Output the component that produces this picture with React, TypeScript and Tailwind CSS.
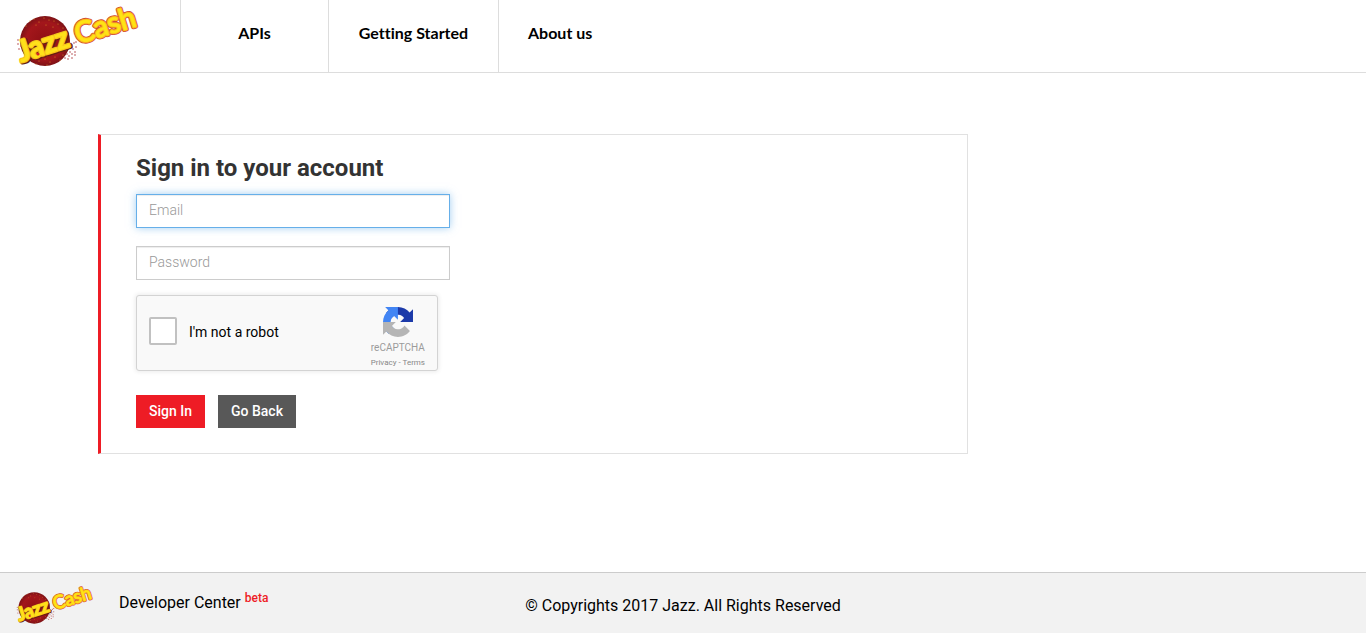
import React, { useId } from "react";

const DOTS: [number, number][] = [
  [30, 21], [34, 19], [39, 22], [44, 18], [49, 20], [54, 21], [58, 24], [26, 26], [36, 25], [46, 25], [53, 27], [63, 28],
  [27, 62], [33, 58], [39, 61], [45, 59], [50, 62], [55, 57], [60, 60], [36, 64], [47, 65], [63, 55], [52, 54], [42, 56],
];

const HALO: [number, number][] = [
  [18, 40], [21, 42], [18, 44], [21, 46], [19, 49], [66, 50], [69, 48], [72, 45], [74, 43], [67, 54], [70, 52], [73, 49],
  [76, 47], [65, 58], [69, 56], [72, 54], [75, 52], [76, 42], [68, 59], [75, 55], [72, 58],
];

function JazzCashLogo({ className }: { className: string }) {
  const id = useId();
  return (
    <svg viewBox="16 0 124 68" className={className} role="img" aria-label="JazzCash">
      <defs>
        <radialGradient id={id}>
          <stop offset="0" stopColor="#8e1014" />
          <stop offset="0.75" stopColor="#a3161b" />
          <stop offset="1" stopColor="#7d1216" />
        </radialGradient>
      </defs>
      <circle cx="45" cy="41" r="25" fill={`url(#${id})`} />
      {DOTS.map(([x, y]) => (
        <circle key={`${x}-${y}`} cx={x} cy={y} r="0.6" fill="#d98324" />
      ))}
      {HALO.map(([x, y]) => (
        <circle key={`${x}-${y}`} cx={x} cy={y} r="0.8" fill="#b5484c" />
      ))}
      <g
        fontFamily="Lato, sans-serif"
        fontWeight="400"
        strokeLinejoin="round"
        strokeLinecap="round"
      >
        <g transform="translate(21 62) rotate(-18)" fontSize="29">
          <text fill="#5f2410" stroke="#5f2410" strokeWidth="4" x="1" y="1" aria-hidden="true">Jazz</text>
          <text fill="#ffd91c" stroke="#f8c41c" strokeWidth="3.4">Jazz</text>
          <text fill="#ffe11a" stroke="#ffe11a" strokeWidth="1" aria-hidden="true">Jazz</text>
        </g>
        <g transform="translate(78 44) rotate(-17)" fontSize="29">
          <text fill="#cf4a35" stroke="#cf4a35" strokeWidth="4.4" aria-hidden="true">Cash</text>
          <text fill="#fbb51c" stroke="#fbb51c" strokeWidth="2.8">Cash</text>
          <text fill="#ffe414" stroke="#ffe414" strokeWidth="0.6" aria-hidden="true">Cash</text>
        </g>
      </g>
      <circle cx="38" cy="54" r="1.6" fill="#d3232a" />
    </svg>
  );
}

function RecaptchaLogo() {
  return (
    <svg viewBox="0 0 64 64" className="size-[30px]" aria-hidden="true">
      <path
        fill="#1c3aa9"
        d="M64 31.955l-.033-1.37V4.687l-7.16 7.16C50.948 4.674 42.033.093 32.05.093c-10.4 0-19.622 4.96-25.458 12.64l11.736 11.86a15.55 15.55 0 0 1 4.754-5.334c2.05-1.6 4.952-2.906 8.968-2.906.485 0 .86.057 1.135.163 4.976.393 9.288 3.14 11.828 7.124l-8.307 8.307L64 31.953"
      />
      <path
        fill="#4285f4"
        d="M31.862.094l-1.37.033H4.594l7.16 7.16C4.58 13.147 0 22.06 0 32.046c0 10.4 4.96 19.622 12.64 25.458L24.5 45.768a15.55 15.55 0 0 1-5.334-4.754c-1.6-2.05-2.906-4.952-2.906-8.968 0-.485.057-.86.163-1.135.393-4.976 3.14-9.288 7.124-11.828l8.307 8.307L31.86.095"
      />
      <path
        fill="#b5b5b5"
        d="M.001 32.045l.033 1.37v25.898l7.16-7.16c5.86 7.173 14.774 11.754 24.76 11.754 10.4 0 19.622-4.96 25.458-12.64l-11.736-11.86a15.55 15.55 0 0 1-4.754 5.334c-2.05 1.6-4.952 2.906-8.968 2.906-.485 0-.86-.057-1.135-.163-4.976-.393-9.288-3.14-11.828-7.124l8.307-8.307c-10.522.04-22.4.066-27.295-.005"
      />
    </svg>
  );
}

const fieldClass =
  "block h-[34px] w-full border bg-white px-3 pb-0.5 text-sm font-light text-[#555555] outline-none placeholder:text-[#999999]";

export default function App() {
  return (
    <div className="flex min-h-screen flex-col bg-white font-['Roboto',sans-serif] text-black">
      <header className="flex h-[73px] border-b border-[#dddddd]">
        <a href="#home" className="w-[181px] shrink-0 border-r border-[#dddddd] pl-4">
          <JazzCashLogo className="h-17 w-[124px] overflow-visible" />
        </a>
        <nav className="flex font-['Lato',sans-serif] text-base leading-5 font-bold [font-variant-ligatures:none]">
          <a href="#apis" className="w-37 border-r border-[#dddddd] pt-[23px] text-center">APIs</a>
          <a href="#start" className="w-[170px] border-r border-[#dddddd] pt-[23px] text-center">Getting Started</a>
          <a href="#about" className="px-[29px] pt-[23px]">About us</a>
        </nav>
      </header>

      <main className="grow px-[98px] pt-[61px] pb-12">
        <form
          className="max-w-[870px] border border-l-3 border-[#e1e1e1] border-l-[#ee1c25] pt-5 pr-6 pb-[25px] pl-[35px]"
          onSubmit={(e) => e.preventDefault()}
        >
          <h1 className="text-2xl leading-[26px] font-bold text-[#333333]">Sign in to your account</h1>
          <div className="mt-[13px] flex max-w-[314px] flex-col gap-[18px]">
            <input
              type="email"
              aria-label="Email"
              placeholder="Email"
              className={`${fieldClass} border-[#66afe9] shadow-[inset_0_1px_1px_rgba(0,0,0,0.075),0_0_8px_rgba(102,175,233,0.6)]`}
            />
            <input
              type="password"
              aria-label="Password"
              placeholder="Password"
              className={`${fieldClass} border-[#cccccc] shadow-[inset_0_1px_1px_rgba(0,0,0,0.075)]`}
            />
          </div>

          <div className="mt-[15px] flex h-19 max-w-[302px] items-center justify-between rounded-[3px] border border-[#d3d3d3] bg-[#f9f9f9] px-3 shadow-[0_0_4px_1px_rgba(0,0,0,0.08)]">
            <div className="flex items-center gap-3 pb-1">
              <input
                id="robot"
                type="checkbox"
                className="size-7 appearance-none rounded-xs border-2 border-[#c1c1c1] bg-white checked:bg-[#4285f4]"
              />
              <label htmlFor="robot" className="pt-0.5 text-sm leading-[17px]">I'm not a robot</label>
            </div>
            <div className="flex flex-col items-center pt-2.5 text-[#9b9b9b]">
              <RecaptchaLogo />
              <div className="mt-[3px] text-[10px] leading-[15px]">reCAPTCHA</div>
              <div className="text-[8px] leading-[15px] text-[#888888]">
                <a href="#privacy">Privacy</a> - <a href="#terms">Terms</a>
              </div>
            </div>
          </div>

          <div className="mt-6 flex gap-[13px]">
            <button type="submit" className="h-[33px] bg-[#ee1c25] px-[13px] pb-0.5 text-sm font-medium text-white">
              Sign In
            </button>
            <button type="button" className="h-[33px] bg-[#585858] px-[13px] pb-0.5 text-sm font-medium text-white">
              Go Back
            </button>
          </div>
        </form>
      </main>

      <footer className="grid h-[61px] grid-cols-[1fr_auto_1fr] border-t border-[#cccccc] bg-[#f2f2f2]">
        <div className="flex items-start pt-[9px] pl-4">
          <JazzCashLogo className="h-[43px] w-[78px] overflow-visible" />
          <p className="ml-[25px] pt-[9px] text-base leading-6">
            Developer Center <sup className="top-0 align-[6px] text-xs leading-none font-medium text-[#ee1c25]">beta</sup>
          </p>
        </div>
        <p className="pt-[21px] text-base leading-6">© Copyrights 2017 Jazz. All Rights Reserved</p>
      </footer>
    </div>
  );
}
